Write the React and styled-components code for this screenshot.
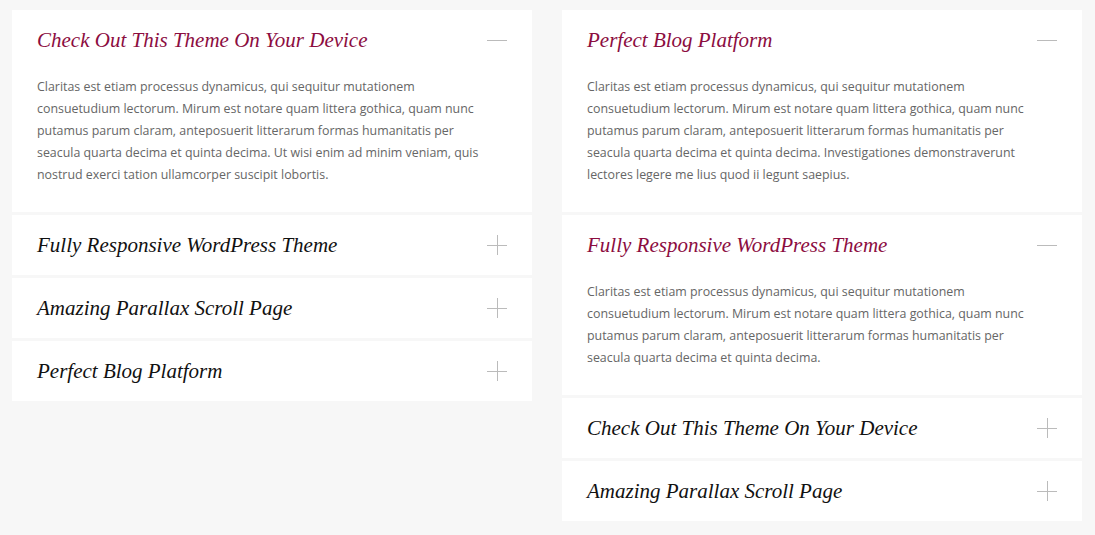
import React, { useState } from "react";
import styled, { createGlobalStyle } from "styled-components";

const GlobalStyle = createGlobalStyle`
  html, body {
    margin: 0;
    padding: 0;
    background: #f7f7f7;
  }
`;

const TEXT_A =
  "Claritas est etiam processus dynamicus, qui sequitur mutationem consuetudium lectorum. Mirum est notare quam littera gothica, quam nunc putamus parum claram, anteposuerit litterarum formas humanitatis per seacula quarta decima et quinta decima.";

const columns = [
  {
    open: [0],
    items: [
      {
        title: "Check Out This Theme On Your Device",
        text: TEXT_A + " Ut wisi enim ad minim veniam, quis nostrud exerci tation ullamcorper suscipit lobortis.",
      },
      { title: "Fully Responsive WordPress Theme", text: TEXT_A },
      { title: "Amazing Parallax Scroll Page", text: TEXT_A },
      { title: "Perfect Blog Platform", text: TEXT_A },
    ],
  },
  {
    open: [0, 1],
    items: [
      {
        title: "Perfect Blog Platform",
        text: TEXT_A + " Investigationes demonstraverunt lectores legere me lius quod ii legunt saepius.",
      },
      { title: "Fully Responsive WordPress Theme", text: TEXT_A },
      { title: "Check Out This Theme On Your Device", text: TEXT_A },
      { title: "Amazing Parallax Scroll Page", text: TEXT_A },
    ],
  },
];

const Page = styled.div`
  display: grid;
  grid-template-columns: 520px 520px;
  column-gap: 30px;
  align-items: start;
  padding: 10px 12px;
  min-height: 535px;
  box-sizing: border-box;
`;

const Column = styled.div`
  display: flex;
  flex-direction: column;
  gap: 3px;
`;

const Item = styled.div`
  background: #fff;
`;

const Header = styled.button`
  display: flex;
  align-items: center;
  justify-content: space-between;
  width: 100%;
  height: 60px;
  padding: 0 25px;
  border: 0;
  background: transparent;
  cursor: pointer;
  text-align: left;
`;

const Title = styled.span`
  font-family: Georgia, "Liberation Serif", serif;
  font-style: italic;
  font-size: 21px;
  color: ${(p) => (p.$open ? "#8c0d3f" : "#111")};
`;

const Body = styled.p`
  margin: 0;
  padding: 6px 50px 26px 25px;
  font-family: "Open Sans", sans-serif;
  font-size: 12.4px;
  line-height: 22px;
  color: #666;
`;

const Toggle = ({ open }) => (
  <svg width="20" height="20" viewBox="0 0 20 20">
    <line x1="0" y1="10.5" x2="20" y2="10.5" stroke="#bbb" strokeWidth="1" />
    {!open && <line x1="10.5" y1="0" x2="10.5" y2="20" stroke="#bbb" strokeWidth="1" />}
  </svg>
);

const Accordion = ({ items, initial }) => {
  const [open, setOpen] = useState(initial);
  const flip = (i) =>
    setOpen((o) => (o.includes(i) ? o.filter((x) => x !== i) : [...o, i]));
  return (
    <Column>
      {items.map((it, i) => {
        const isOpen = open.includes(i);
        return (
          <Item key={i}>
            <Header onClick={() => flip(i)}>
              <Title $open={isOpen}>{it.title}</Title>
              <Toggle open={isOpen} />
            </Header>
            {isOpen && <Body>{it.text}</Body>}
          </Item>
        );
      })}
    </Column>
  );
};

export default function App() {
  return (
    <>
      <GlobalStyle />
      <Page>
        {columns.map((c, i) => (
          <Accordion key={i} items={c.items} initial={c.open} />
        ))}
      </Page>
    </>
  );
}
